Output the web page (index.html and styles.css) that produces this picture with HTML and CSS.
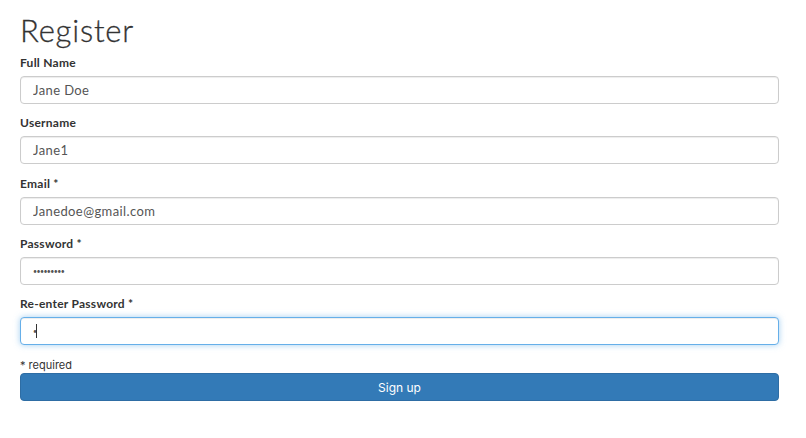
FILE: index.html
```html
<!DOCTYPE html>
<html>
<head>
<meta charset="utf-8">
<link rel="stylesheet" href="styles.css">
</head>
<body>
<div class="container">
  <h1 class="title">Register</h1>
  <form class="form">
    <div class="group">
      <label class="label">Full Name</label>
      <input class="input" type="text" value="Jane Doe">
    </div>
    <div class="group">
      <label class="label">Username</label>
      <input class="input" type="text" value="Jane1">
    </div>
    <div class="group">
      <label class="label">Email *</label>
      <input class="input" type="text" value="Janedoe@gmail.com">
    </div>
    <div class="group">
      <label class="label">Password *</label>
      <input class="input pw" type="password" value="123456789">
    </div>
    <div class="group">
      <label class="label">Re-enter Password *</label>
      <div class="field">
        <input class="input pw focused" type="password" value="1">
        <span class="caret"></span>
      </div>
    </div>
    <div class="note">* required</div>
    <button class="btn" type="button">Sign up</button>
  </form>
</div>
</body>
</html>
```
FILE: styles.css
```css
html, body {
  margin: 0;
  padding: 0;
  background: #fff;
}
body {
  font-family: Lato, "Noto Sans", sans-serif;
  color: #333;
}
.container {
  padding: 0 27px 0 20px;
}
.title {
  margin: 14px 0 7px;
  font-size: 31px;
  line-height: 33px;
  font-weight: 300;
  letter-spacing: 0.8px;
  color: #333;
  -webkit-text-stroke: 0.3px #333;
}
.form {
  display: flex;
  flex-direction: column;
}
.group {
  display: flex;
  flex-direction: column;
  margin-bottom: 10.25px;
}
.label {
  font-size: 12px;
  line-height: 17px;
  font-weight: 700;
  letter-spacing: 0.25px;
  margin-bottom: 5px;
}
.field {
  position: relative;
  display: flex;
}
.input {
  box-sizing: border-box;
  width: 100%;
  height: 28px;
  padding: 0 12px;
  border: 1px solid #ccc;
  border-radius: 4px;
  box-shadow: inset 0 1px 1px rgba(0,0,0,0.075);
  font-family: Lato, "Noto Sans", sans-serif;
  font-size: 13px;
  letter-spacing: 0.4px;
  color: #555;
  background: #fff;
  outline: none;
}
.pw {
  font-size: 7px;
  letter-spacing: -0.6px;
}
.focused {
  border-color: #66afe9;
  box-shadow: inset 0 1px 1px rgba(0,0,0,0.075), 0 0 6px rgba(102,175,233,0.6);
}
.caret {
  position: absolute;
  left: 16px;
  top: 7px;
  width: 1px;
  height: 14px;
  background: #333;
}
.note {
  margin-top: 3px;
  font-family: Inter, "Liberation Sans", sans-serif;
  font-size: 11px;
  line-height: 15px;
  color: #333;
}
.btn {
  height: 28px;
  border: 1px solid #2e6da4;
  border-radius: 4px;
  background: #337ab7;
  color: #fff;
  font-family: Inter, "Liberation Sans", sans-serif;
  font-size: 12px;
  cursor: pointer;
}
```
